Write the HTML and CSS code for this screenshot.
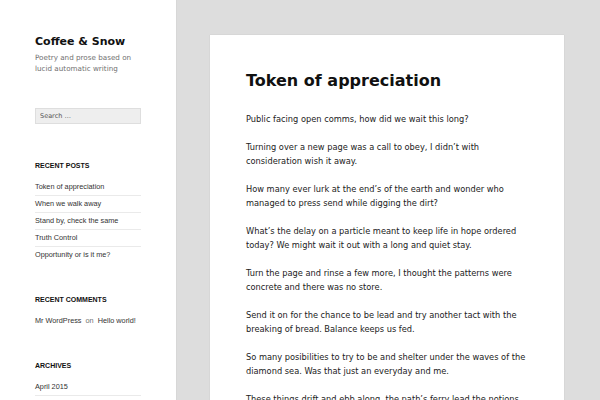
FILE: index.html
```html
<!DOCTYPE html>
<html lang="en">
<head>
  <meta charset="UTF-8" />
  <title>Coffee &amp; Snow</title>
  <link rel="stylesheet" href="styles.css">
</head>
<body>

<aside class="sidebar">
  <div class="site-branding">
    <h1 class="site-title">Coffee &amp; Snow</h1>
    <p class="site-description">Poetry and prose based on lucid automatic writing</p>
  </div>

  <div class="widget search-widget">
    <input type="search" placeholder="Search …">
  </div>

  <div class="widget">
    <h2 class="widget-title">Recent Posts</h2>
    <ul>
      <li><a href="#">Token of appreciation</a></li>
      <li><a href="#">When we walk away</a></li>
      <li><a href="#">Stand by, check the same</a></li>
      <li><a href="#">Truth Control</a></li>
      <li><a href="#">Opportunity or is it me?</a></li>
    </ul>
  </div>

  <div class="widget">
    <h2 class="widget-title">Recent Comments</h2>
    <ul>
      <li><a href="#">Mr WordPress</a> <span class="on">on</span> <a href="#">Hello world!</a></li>
    </ul>
  </div>

  <div class="widget">
    <h2 class="widget-title">Archives</h2>
    <ul>
      <li><a href="#">April 2015</a></li>
      <li><a href="#">March 2015</a></li>
    </ul>
  </div>
</aside>

<main class="content">
  <article class="post">
    <h2 class="entry-title">Token of appreciation</h2>
    <div class="entry-content">
      <p>Public facing open comms, how did we wait this long?</p>
      <p>Turning over a new page was a call to obey, I didn’t with consideration wish it away.</p>
      <p>How many ever lurk at the end’s of the earth and wonder who managed to press send while digging the dirt?</p>
      <p>What’s the delay on a particle meant to keep life in hope ordered today? We might wait it out with a long and quiet stay.</p>
      <p>Turn the page and rinse a few more, I thought the patterns were concrete and there was no store.</p>
      <p>Send it on for the chance to be lead and try another tact with the breaking of bread. Balance keeps us fed.</p>
      <p>So many posibilities to try to be and shelter under the waves of the diamond sea. Was that just an everyday and me.</p>
      <p>These things drift and ebb along, the path’s ferry lead the notions through the lost and found.</p>
    </div>
  </article>
</main>

</body>
</html>
```

FILE: styles.css
```css
body {
  margin: 0;
  display: flex;
  height: 400px;
  overflow: hidden;
  background: #dddddd;
  font-family: 'DejaVu Sans', sans-serif;
  color: #333;
}

/* Sidebar */
.sidebar {
  width: 141px;
  flex-shrink: 0;
  background: #fff;
  padding: 35px 0 0 35px;
  box-shadow: 0 0 1px rgba(0,0,0,0.15);
}
.site-title {
  margin: 0;
  font-size: 11px;
  line-height: 14px;
  font-weight: bold;
  color: #111;
}
.site-description {
  margin: 3px 0 0;
  width: 106px;
  font-size: 7.2px;
  line-height: 11px;
  color: #707070;
}
.search-widget { margin-top: 34px; }
.search-widget input {
  display: block;
  box-sizing: border-box;
  width: 106px;
  height: 16px;
  margin: 0;
  padding: 0 4px;
  background: #eee;
  border: 1px solid #dedede;
  font-family: 'DejaVu Sans', sans-serif;
  font-size: 6.5px;
  color: #333;
}
.search-widget input::placeholder { color: #555; }

.widget {
  width: 106px;
  margin-bottom: 32px;
  font-family: 'Liberation Sans', Arial, sans-serif;
}
.search-widget { margin-bottom: 37px; }
.widget-title {
  margin: 0 0 8px;
  font-size: 7px;
  line-height: 10px;
  font-weight: bold;
  text-transform: uppercase;
  color: #111;
}
.widget ul { list-style: none; margin: 0; padding: 0; }
.widget li {
  padding: 3px 0;
  font-size: 7.3px;
  line-height: 10px;
  border-bottom: 1px solid #eaeaea;
  white-space: nowrap;
}
.widget li:last-child { border-bottom: none; }
.widget:last-child { margin-top: 1px; }
.widget:last-child li { border-bottom: 1px solid #eaeaea; }
.widget a { color: #333; text-decoration: none; }
.widget .on { color: #707070; margin: 0 2px; }

/* Content */
.content {
  flex: 1;
  padding: 35px 36px 0 34px;
}
.post {
  background: #fff;
  padding: 36px 34px 0 36px;
  height: 100%;
  box-shadow: 0 0 1px rgba(0,0,0,0.15);
}
.entry-title {
  margin: 0 0 21px;
  font-size: 16px;
  line-height: 20px;
  font-weight: bold;
  color: #111;
}
.entry-content p {
  margin: 0 0 14px;
  font-size: 8.25px;
  line-height: 14px;
  color: #222;
}
```
